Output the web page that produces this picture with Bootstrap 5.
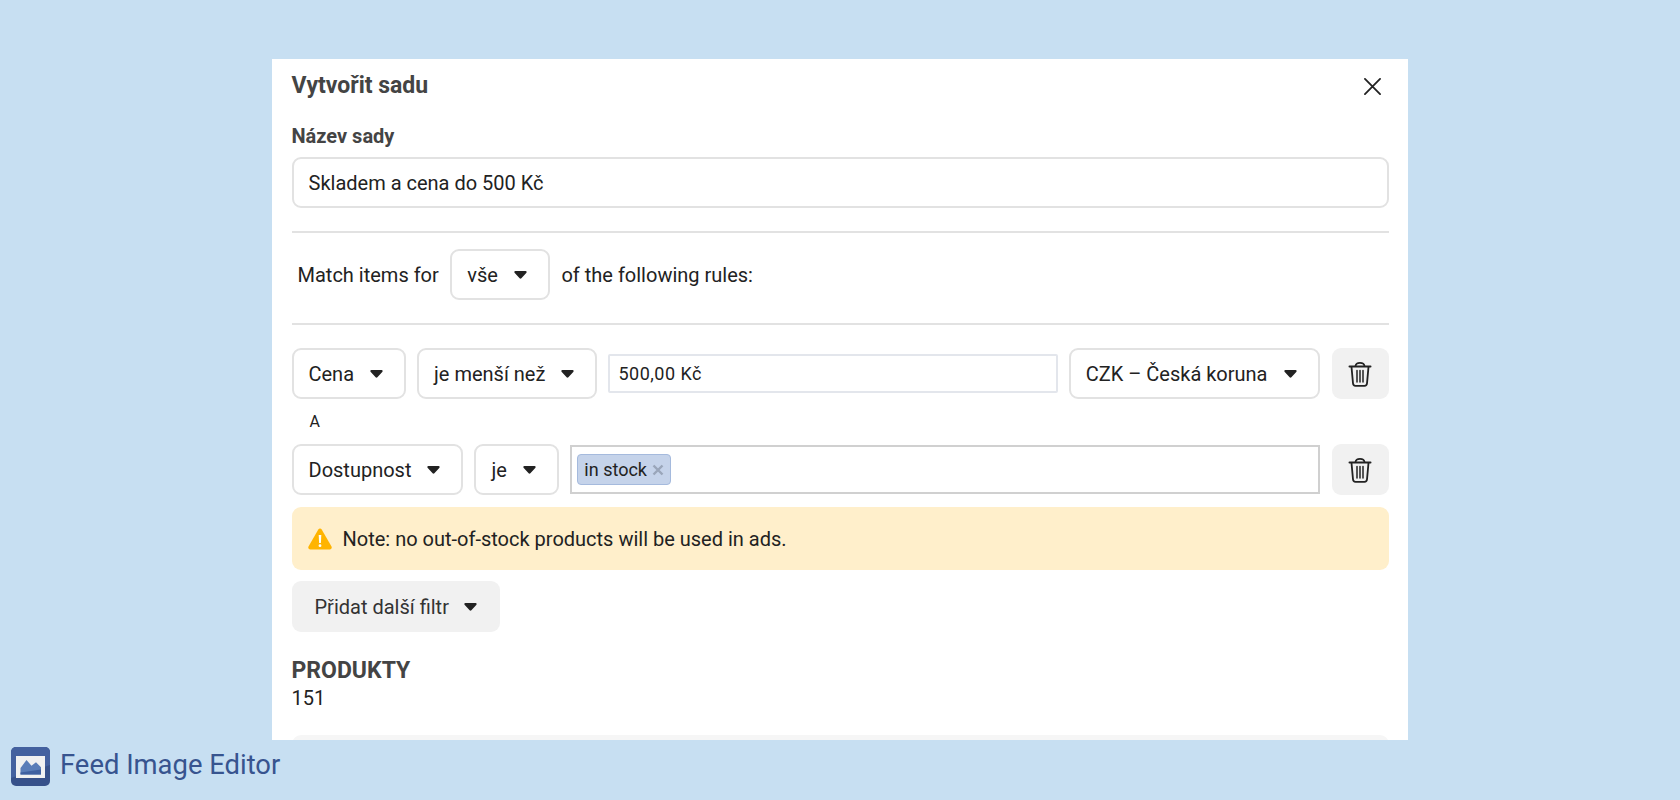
<!DOCTYPE html>
<html lang="cs">
<head>
    <meta charset="UTF-8">
    <meta name="viewport" content="width=device-width, initial-scale=1.0">
    <title>Vytvořit sadu</title>
    <link href="https://cdn.jsdelivr.net/npm/bootstrap@5.3.0/dist/css/bootstrap.min.css" rel="stylesheet">
    <style>
        body {
            background-color: #c7dff2;
            font-family: Roboto, "Liberation Sans", sans-serif;
            font-size: 20px;
            color: #222;
            height: 800px;
            overflow: hidden;
        }
        .set-dialog {
            width: 1136px;
            height: 681px;
            margin: 59px 0 0 272px;
            padding: 0 19.5px;
            background-color: #fff;
            overflow: hidden;
        }
        .set-head {
            height: 30px;
            margin: 12px 0 23px;
        }
        .set-title {
            font-size: 23px;
            line-height: 30px;
            font-weight: 700;
            color: #444;
            margin: 0;
        }
        .set-label {
            font-size: 20px;
            font-weight: 700;
            color: #444;
            line-height: 24px;
            margin-bottom: 9px;
            display: block;
        }
        .set-input {
            height: 51px;
            font-size: 20px;
            color: #222;
            padding: 0 15px;
            border: 2px solid #e2e2e2;
            border-radius: 9px;
        }
        .set-rule {
            margin: 0;
            border: 0;
            border-top: 2px solid #e2e2e2;
            opacity: 1;
        }
        .rule-top {
            margin-top: 23px;
        }
        .rule-bottom {
            margin-bottom: 23px;
        }
        .match-row {
            height: 90px;
            padding: 0 0 7px 6px;
            gap: 11.5px;
        }
        .pick-btn {
            height: 51px;
            font-size: 20px;
            color: #222;
            background-color: #fff;
            border: 2px solid #e2e2e2;
            border-radius: 9px;
            padding: 0 21px 0 15px;
            gap: 16px;
            flex-shrink: 0;
        }
        .pick-btn:hover {
            background-color: #f7f7f7;
            border-color: #e2e2e2;
            color: #222;
        }
        .rule-row {
            gap: 11px;
        }
        .amount-input {
            height: 39px;
            font-size: 18px;
            letter-spacing: 0.5px;
            color: #222;
            padding: 0 8px;
            border: 2px solid #e3e6ec;
            border-radius: 2px;
        }
        .trash-btn {
            width: 57px;
            height: 51px;
            margin-left: 1px;
            padding: 0;
            background-color: #f1f1f1;
            border: 0;
            border-radius: 9px;
            flex-shrink: 0;
        }
        .and-label {
            font-size: 16px;
            line-height: 45px;
            padding-left: 18px;
        }
        .tag-box {
            height: 49px;
            border: 2px solid #d0d0d0;
            padding: 0 5.5px;
        }
        .tag-chip {
            height: 31px;
            width: 94px;
            background-color: #c5d3ea;
            border: 1px solid #a5badd;
            border-radius: 4px;
            font-size: 18px;
            padding-left: 6px;
            gap: 5px;
        }
        .note-box {
            height: 63px;
            margin: 12px 0 11px;
            padding: 0 0 0 16px;
            gap: 11px;
            color: #222;
            background-color: #ffefcb;
            border: 0;
            border-radius: 9px;
        }
        .more-btn {
            height: 51px;
            width: 208px;
            font-size: 20px;
            color: #333;
            background-color: #f1f1f1;
            border: 0;
            border-radius: 9px;
            padding: 0 0 0 23px;
            gap: 15px;
        }
        .count-title {
            font-size: 23px;
            font-weight: 700;
            color: #444;
            line-height: 28px;
            margin-top: 25px;
        }
        .count-value {
            line-height: 24px;
            margin-top: 1px;
        }
        .next-box {
            height: 60px;
            margin-top: 25px;
            background-color: #f6f6f6;
            border-radius: 9px;
        }
        .brand-bar {
            margin: 7px 0 0 11px;
            gap: 10px;
            color: #37548f;
            font-size: 27.4px;
            line-height: 37px;
        }
        .brand-bar span {
            padding-bottom: 2px;
        }
    </style>
</head>
<body>
    <svg width="0" height="0" class="d-block">
        <defs>
            <symbol id="caret" viewBox="0 0 14 9">
                <path d="M1.2 0h11.6c1 0 1.500 1.100.9 1.900L8 8.200c-.5.6-1.500.6-2 0L.3 1.900C-.3 1.100.2 0 1.200 0z" fill="#222"/>
            </symbol>
            <symbol id="trash" viewBox="0 0 24 26">
                <g fill="none" stroke="#222" stroke-linecap="round" stroke-linejoin="round">
                    <path d="M1.500 5.500h21" stroke-width="2"/>
                    <path d="M7.500 5C7.800 2.800 9 1.800 12 1.800s4.200 1 4.500 3.200" stroke-width="1.800"/>
                    <path d="M3.500 5.800l1.500 16.500c.1 1.500 1 2.500 2.500 2.500h9c1.500 0 2.400-1 2.500-2.500l1.500-16.500" stroke-width="1.800"/>
                    <path d="M9 9.500v11.500M12 9.500v11.500M15 9.500v11.500" stroke-width="1.500"/>
                </g>
            </symbol>
        </defs>
    </svg>

    <div class="set-dialog">
        <div class="set-head d-flex align-items-center justify-content-between">
            <h1 class="set-title">Vytvořit sadu</h1>
            <svg width="17" height="17" viewBox="0 0 18 18" class="me-2" aria-label="Zavřít">
                <path d="M1 1l16 16M17 1L1 17" stroke="#222" stroke-width="1.900" stroke-linecap="round"/>
            </svg>
        </div>

        <label class="set-label" for="setName">Název sady</label>
        <input id="setName" class="form-control set-input" type="text" value="Skladem a cena do 500 Kč">

        <hr class="set-rule rule-top">

        <div class="match-row d-flex align-items-center">
            <span>Match items for</span>
            <button class="btn pick-btn d-flex align-items-center" type="button">
                vše
                <svg width="13" height="8"><use href="#caret"/></svg>
            </button>
            <span>of the following rules:</span>
        </div>

        <hr class="set-rule rule-bottom">

        <div class="rule-row d-flex align-items-center">
            <button class="btn pick-btn d-flex align-items-center" type="button">
                Cena
                <svg width="13" height="8"><use href="#caret"/></svg>
            </button>
            <button class="btn pick-btn d-flex align-items-center" type="button">
                je menší než
                <svg width="13" height="8"><use href="#caret"/></svg>
            </button>
            <input class="form-control amount-input flex-grow-1 w-auto" type="text" value="500,00 Kč">
            <button class="btn pick-btn d-flex align-items-center" type="button">
                CZK – Česká koruna
                <svg width="13" height="8"><use href="#caret"/></svg>
            </button>
            <button class="btn trash-btn" type="button" aria-label="Smazat">
                <svg width="24" height="26"><use href="#trash"/></svg>
            </button>
        </div>

        <div class="and-label">A</div>

        <div class="rule-row d-flex align-items-center">
            <button class="btn pick-btn d-flex align-items-center" type="button">
                Dostupnost
                <svg width="13" height="8"><use href="#caret"/></svg>
            </button>
            <button class="btn pick-btn d-flex align-items-center" type="button">
                je
                <svg width="13" height="8"><use href="#caret"/></svg>
            </button>
            <div class="tag-box flex-grow-1 d-flex align-items-center">
                <span class="tag-chip d-flex align-items-center">in stock
                    <svg width="12" height="12" viewBox="0 0 12 12"><path d="M1.500 1.500l9 9M10.500 1.500l-9 9" stroke="#9aa6ba" stroke-width="2.400"/></svg>
                </span>
            </div>
            <button class="btn trash-btn" type="button" aria-label="Smazat">
                <svg width="24" height="26"><use href="#trash"/></svg>
            </button>
        </div>

        <div class="alert note-box d-flex align-items-center" role="alert">
            <svg width="24" height="22" viewBox="0 0 24 22">
                <path d="M10.300 1.500c.8-1.300 2.600-1.300 3.400 0l9.800 17c.7 1.300-.2 2.900-1.700 2.900H2.200C.7 21.400-.2 19.800.5 18.500z" fill="#ffb400"/>
                <path d="M10.700 7h2.600l-.4 8h-1.800z" fill="#fff"/>
                <circle cx="12" cy="17.700" r="1.400" fill="#fff"/>
            </svg>
            <span>Note: no out-of-stock products will be used in ads.</span>
        </div>

        <button class="btn more-btn d-flex align-items-center" type="button">
            Přidat další filtr
            <svg width="13" height="8"><use href="#caret"/></svg>
        </button>

        <div class="count-title">PRODUKTY</div>
        <div class="count-value">151</div>

        <div class="next-box"></div>
    </div>

    <div class="brand-bar d-flex align-items-center">
        <svg width="39" height="39" viewBox="0 0 39 39">
            <rect width="39" height="39" rx="5" fill="#37518a"/>
            <path d="M0 5a5 5 0 0 1 5-5h29a5 5 0 0 1 5 5v13L0 31z" fill="#44619f"/>
            <rect x="5" y="9" width="29" height="22" fill="#f1f1f1"/>
            <path d="M9.500 27.500v-6.500l6-8 5 5.700 4.500-3.400 5 5v7.200z" fill="#5a7db8"/>
            <path d="M9.500 27.500v-2l20.500-3v5z" fill="#3f60a0"/>
        </svg>
        <span>Feed Image Editor</span>
    </div>

    <script src="https://cdn.jsdelivr.net/npm/bootstrap@5.3.0/dist/js/bootstrap.bundle.min.js"></script>
</body>
</html>
